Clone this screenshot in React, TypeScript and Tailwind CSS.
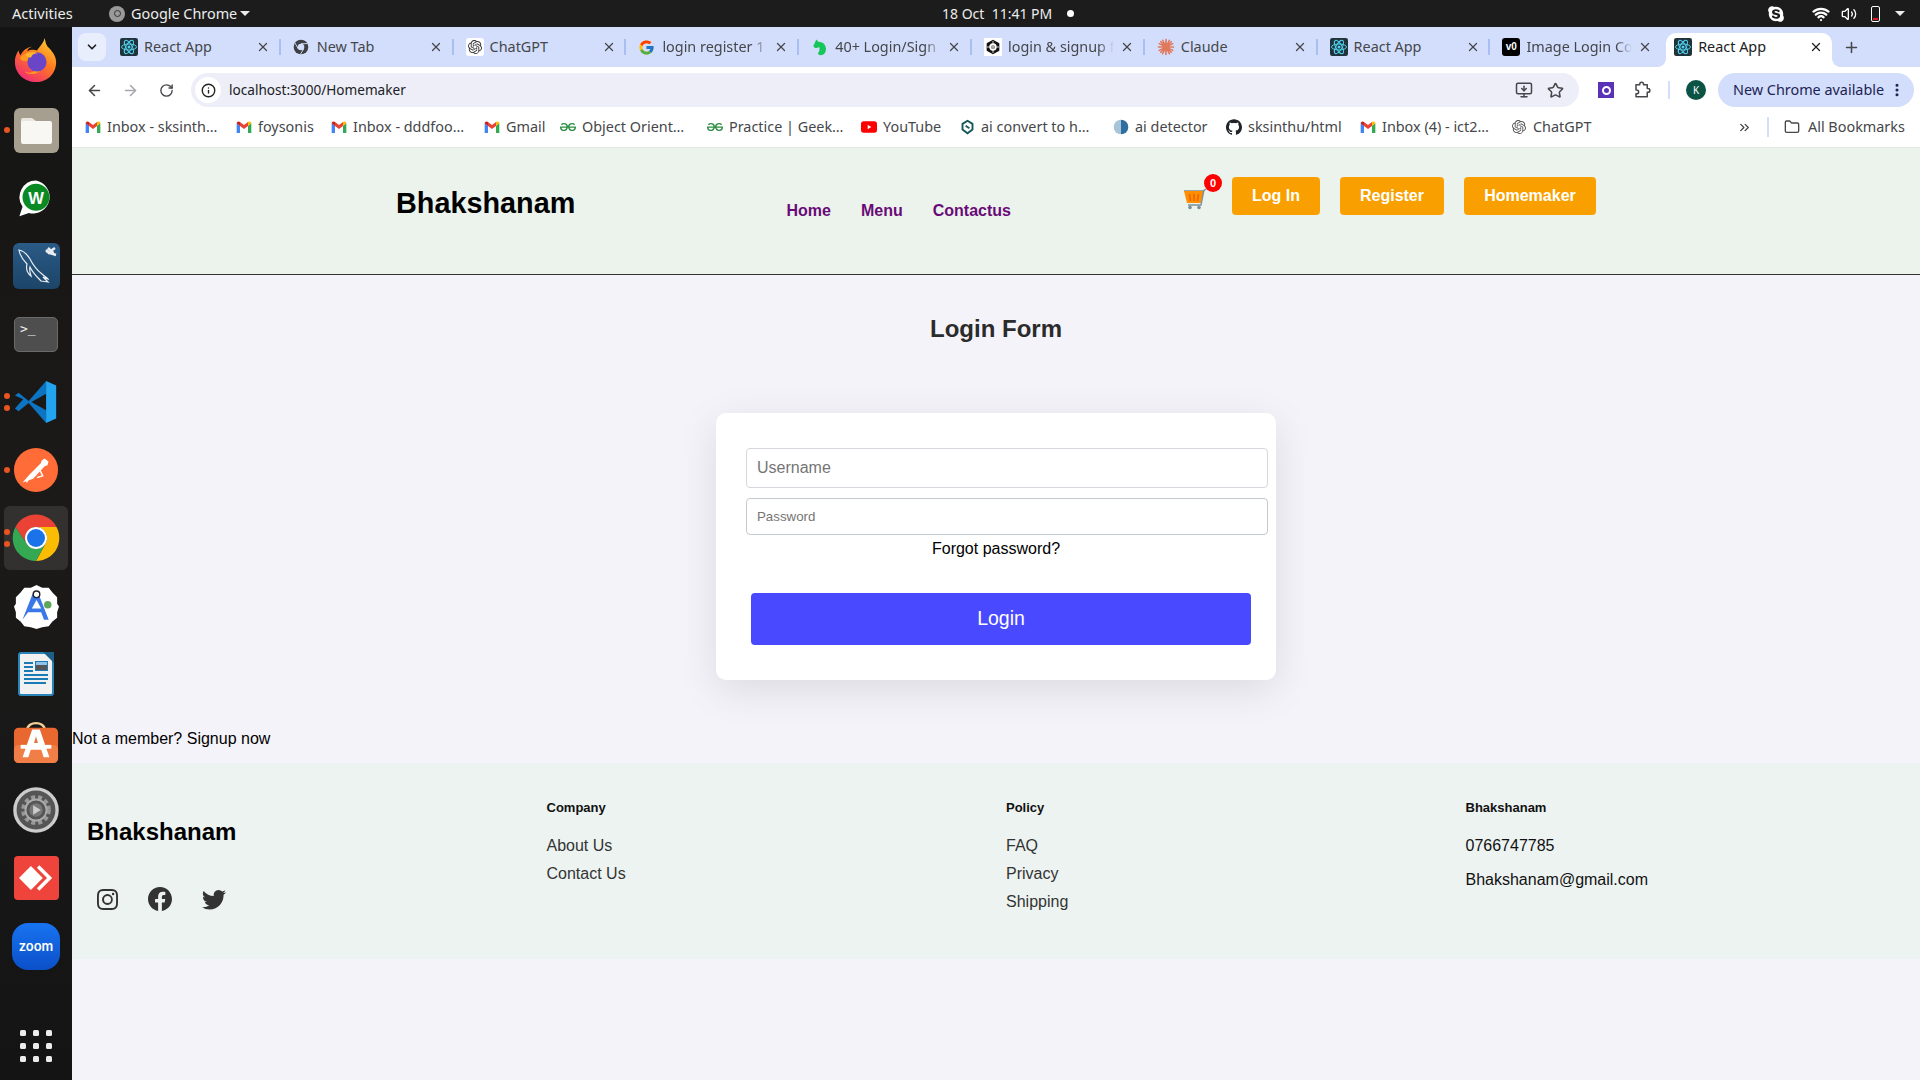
import React from "react";
import { BsInstagram, BsFacebook, BsTwitter } from "react-icons/bs";
import { FaSkype } from "react-icons/fa";
import { SiOpenai, SiGeeksforgeeks, SiGithub } from "react-icons/si";
import { FcGoogle } from "react-icons/fc";
import { ArrowLeft, ArrowRight, RotateCw, Info, Star, MonitorDown, Plus, X, ChevronDown, ChevronsRight, Folder, EllipsisVertical, Volume2, Wifi } from "lucide-react";

const Gmail = () => (
  <svg viewBox="0 0 24 24" className="w-[16px] h-[16px] shrink-0">
    <path fill="#4285F4" d="M1 21h5V10L1 6z" />
    <path fill="#34A853" d="M18 21h5V6l-5 4z" />
    <path fill="#EA4335" d="M6 10.5l6 4.5 6-4.5V4.5L12 9 6 4.5z" />
    <path fill="#C5221F" d="M1 6.5C1 3.8 4 2.6 6 4.5v6L1 6.5z" />
    <path fill="#FBBC04" d="M23 6.5c0-2.7-3-3.9-5-2v6l5-4z" />
  </svg>
);
const ReactFav = () => (
  <svg viewBox="0 0 24 24" className="w-[18px] h-[18px] shrink-0">
    <rect width="24" height="24" rx="3" fill="#20323a" />
    <g fill="none" stroke="#4fd0ee" strokeWidth="1.3">
      <ellipse cx="12" cy="12" rx="10" ry="4" />
      <ellipse cx="12" cy="12" rx="10" ry="4" transform="rotate(60 12 12)" />
      <ellipse cx="12" cy="12" rx="10" ry="4" transform="rotate(120 12 12)" />
    </g>
    <circle cx="12" cy="12" r="2" fill="#4fd0ee" />
  </svg>
);
const ChromeFav = () => (
  <svg viewBox="0 0 24 24" className="w-[16px] h-[16px] shrink-0">
    <circle cx="12" cy="12" r="11" fill="#3c4043" />
    <circle cx="12" cy="12" r="5" fill="#d3defc" />
    <path d="M12 7h10M8 15L3 6M16 15l-5 8" stroke="#d3defc" strokeWidth="1.4" />
  </svg>
);
const GptFav = () => (
  <span className="w-[18px] h-[18px] bg-white rounded-[3px] flex items-center justify-center shrink-0"><SiOpenai size={14} color="#333" /></span>
);
const KnightFav = () => (
  <svg viewBox="0 0 24 24" className="w-[18px] h-[20px] shrink-0">
    <path fill="#16c65a" d="M7 2l3 3c6 0 10 4 10 10 0 4-3 8-7 8-2 0-3-1-4-3 2-1 3-4 2-8-2 1-4 2-6 1L3 11z" />
  </svg>
);
const HexFav = () => (
  <span className="w-[18px] h-[18px] bg-white flex items-center justify-center shrink-0">
    <svg viewBox="0 0 24 24" className="w-[16px] h-[16px]">
      <path d="M12 1l9.5 5.5v11L12 23l-9.5-5.5v-11z" fill="#111" />
      <circle cx="12" cy="12" r="5.5" fill="#fff" />
      <circle cx="12" cy="12" r="2.8" fill="#111" />
      <path d="M12 3v18M3 12h18" stroke="#fff" strokeWidth="1.2" />
    </svg>
  </span>
);
const ClaudeFav = () => (
  <svg viewBox="0 0 24 24" className="w-[18px] h-[18px] shrink-0">
    <g stroke="#e0785a" strokeWidth="2.2" strokeLinecap="round">
      <path d="M12 2v20M2 12h20M5 5l14 14M19 5L5 19M7.5 3l9 18M16.500 3l-9 18M3 7.500l18 9M21 7.500l-18 9" />
    </g>
  </svg>
);
const V0Fav = () => (
  <span className="w-[18px] h-[18px] bg-black rounded-[3px] flex items-center justify-center shrink-0 text-white text-[10px] font-bold leading-none font-['Liberation_Sans',sans-serif]">v0</span>
);

const tabs = [
  { t: "React App", i: <ReactFav /> },
  { t: "New Tab", i: <ChromeFav /> },
  { t: "ChatGPT", i: <GptFav /> },
  { t: "login register 1", i: <FcGoogle size={17} className="shrink-0" /> },
  { t: "40+ Login/Sign", i: <KnightFav /> },
  { t: "login & signup f", i: <HexFav /> },
  { t: "Claude", i: <ClaudeFav /> },
  { t: "React App", i: <ReactFav /> },
  { t: "Image Login Co", i: <V0Fav />, noSep: true },
];

const Gfg = () => <SiGeeksforgeeks size={16} color="#2f8d46" className="shrink-0" />;
const marks = [
  { t: "Inbox - sksinth…", i: <Gmail />, w: "w-[151px]" },
  { t: "foysonis", i: <Gmail />, w: "w-[95px]" },
  { t: "Inbox - dddfoo…", i: <Gmail />, w: "w-[153px]" },
  { t: "Gmail", i: <Gmail />, w: "w-[76px]" },
  { t: "Object Orient…", i: <Gfg />, w: "w-[147px]" },
  { t: "Practice | Geek…", i: <Gfg />, w: "w-[154px]" },
  {
    t: "YouTube",
    i: (
      <svg viewBox="0 0 24 24" className="w-[16px] h-[16px] shrink-0">
        <rect x="0" y="3.500" width="24" height="17" rx="4" fill="#f00" />
        <path d="M10 8.500l5.500 3.500-5.500 3.500z" fill="#fff" />
      </svg>
    ),
    w: "w-[99px]",
  },
  {
    t: "ai convert to  h…",
    i: (
      <svg viewBox="0 0 24 24" className="w-[15px] h-[16px] shrink-0">
        <path d="M12 2l8 5v9l-8 6-8-6V7z" fill="none" stroke="#14585a" strokeWidth="3" />
        <path d="M9 10l6 4" stroke="#14585a" strokeWidth="3" />
      </svg>
    ),
    w: "w-[153px]",
  },
  {
    t: "ai detector",
    i: (
      <svg viewBox="0 0 24 24" className="w-[16px] h-[16px] shrink-0">
        <path d="M12 1a11 11 0 000 22z" fill="#a8c4d8" />
        <path d="M12 1a11 11 0 010 22z" fill="#2f6f9f" />
      </svg>
    ),
    w: "w-[113px]",
  },
  { t: "sksinthu/html", i: <SiGithub size={16} color="#1f2328" className="shrink-0" />, w: "w-[134px]" },
  { t: "Inbox (4) - ict2…", i: <Gmail />, w: "w-[151px]" },
  { t: "ChatGPT", i: <SiOpenai size={14} color="#555" className="shrink-0 mx-[1px]" />, w: "w-[100px]" },
];

const Tile = ({ children, dots = 0, active = false }: { children: React.ReactNode; dots?: number; active?: boolean }) => (
  <div className="relative h-[68px] flex items-center justify-center">
    {active && <div className="absolute left-[4px] right-[4px] top-[2px] bottom-[2px] rounded-[6px] bg-white/10" />}
    {dots > 0 && (
      <div className="absolute left-[4px] top-0 bottom-0 flex flex-col justify-center gap-[6px]">
        {Array.from({ length: dots }).map((_, n) => (
          <span key={n} className="w-[6px] h-[6px] rounded-full bg-[#e95420]" />
        ))}
      </div>
    )}
    <div className="relative flex items-center justify-center">{children}</div>
  </div>
);

const Dock = () => (
  <div className="w-[72px] shrink-0 bg-[linear-gradient(180deg,#141414,#1c1a18_45%,#181818_70%,#141414)] flex flex-col pt-px">
    <Tile>
      <svg viewBox="0 0 48 48" className="w-[46px] h-[46px] mb-[4px]">
        <defs>
          <linearGradient id="ff" x1="0.8" y1="0" x2="0.2" y2="1">
            <stop offset="0" stopColor="#ffcf30" />
            <stop offset="0.45" stopColor="#ff7a1f" />
            <stop offset="1" stopColor="#f0267a" />
          </linearGradient>
        </defs>
        <path fill="url(#ff)" d="M33 1c1 4 1 6 3 9 5 5 9 10 9 16 0 12-9 21-21 21S2 38 2 26c0-5 2-10 4-12 0 2 1 4 2 5 2-5 7-8 12-9-3 1-5 3-5 5 3-2 7-2 10-1 3-4 7-8 8-13z" />
        <path fill="#ff9a1f" d="M7 22c4-5 12-7 17-5 6 2 9 8 7 14-3 8-13 10-19 5 6 3 13 0 13-6 0-3-3-6-8-5-4 0-8 1-10-3z" />
        <circle cx="25" cy="26" r="10" fill="#6a45c8" />
        <path fill="#ffb52e" d="M13 18c4-3 9-3 13-1-3 0-6 1-7 4-2 1-5 0-6-3z" />
      </svg>
    </Tile>
    <Tile dots={1}>
      <div className="w-[45px] h-[45px] rounded-[6px] bg-[#a69e8e] flex items-center justify-center">
        <svg viewBox="0 0 32 32" className="w-[34px] h-[32px]">
          <path fill="#e9e5dc" d="M1 6a2 2 0 012-2h9l4 3v4H1z" />
          <rect x="1" y="7" width="31" height="23" rx="2" fill="#f8f7f4" />
        </svg>
      </div>
    </Tile>
    <Tile>
      <svg viewBox="0 0 48 48" className="w-[38px] h-[38px]">
        <path fill="#fff" d="M24 2a21 21 0 00-17 33L3 47l12-4a21 21 0 109-41z" />
        <circle cx="24" cy="23" r="17" fill="#0a8a22" />
        <text x="24" y="31" textAnchor="middle" fontSize="21" fontWeight="700" fill="#fff" fontFamily="Liberation Sans">W</text>
      </svg>
    </Tile>
    <Tile>
      <div className="w-[47px] h-[46px] rounded-[6px] bg-[linear-gradient(180deg,#2a5a86,#1c4568)]">
        <svg viewBox="0 0 47 46" className="w-full h-full" fill="none" stroke="#e8eef3" strokeWidth="1.2">
          <path d="M6 7c5 1 8 4 11 9 3 6 8 12 12 15 2 2 5 3 6 5l-5-2 5 5-7-1c-5-5-9-9-11-14-1 3 0 6 1 9-4-3-5-8-4-12-3-3-7-8-8-14z" />
          <path d="M33 8l6 3m3-6l-3 2 1 4 3 1m-8-7l3 3-2 2-3-3" strokeWidth="2.500" />
        </svg>
      </div>
    </Tile>
    <Tile>
      <div className="w-[44px] h-[35px] rounded-[5px] bg-[#4e4e4e] border border-[#6a6a6a] text-[#f0f0f0] text-[13px] leading-none pl-[5px] pt-[4px] font-['DejaVu_Sans_Mono',monospace] overflow-hidden">
        &gt;_
      </div>
    </Tile>
    <Tile dots={2}>
      <svg viewBox="0 0 48 48" className="w-[44px] h-[44px]">
        <path fill="#0c74c0" d="M1 17l4-3 11 9 19-22v14L19 24l16 9 0 14-19-22-11 9-4-3 9-10z" />
        <path fill="#22a4ee" d="M35 1l11 5v36l-11 5z" />
      </svg>
    </Tile>
    <Tile dots={1}>
      <svg viewBox="0 0 48 48" className="w-[46px] h-[46px]">
        <circle cx="24" cy="24" r="23" fill="#ff6c37" />
        <path fill="#fff" d="M10 37l11-4 12-13 3-1 1-4-4-3-3 2-1 3-12 12z" />
        <path stroke="#fff" strokeWidth="1.500" d="M18 30l-4 7M27 22l4 8-6 2" fill="none" />
      </svg>
    </Tile>
    <Tile dots={2} active>
      <svg viewBox="0 0 48 48" className="w-[48px] h-[48px]">
        <path fill="#ea4335" d="M24 13H44.500A23 23 0 003.500 13L14.500 29.500A11 11 0 0124 13z" />
        <path fill="#fbbc04" d="M44.500 13A23 23 0 0124 47L33.500 29.500A11 11 0 0024 13z" />
        <path fill="#34a853" d="M24 47A23 23 0 013.500 13L14.500 29.500A11 11 0 0033.500 29.500z" />
        <circle cx="24" cy="24" r="11" fill="#fff" />
        <circle cx="24" cy="24" r="9" fill="#1a73e8" />
      </svg>
    </Tile>
    <Tile>
      <svg viewBox="0 0 48 48" className="w-[45px] h-[45px]">
        <path fill="#fff" d="M24 1l6 3 7 0 4 5 5 5 0 7 2 3-2 6 0 6-5 4-4 5-7 1-6 2-6-2-7-1-4-5-5-4 0-6-2-6 2-3 0-7 5-5 4-5 7 0z" />
        <path fill="#3b78e7" d="M22 10h4l11 28h-5l-3-8H15l-6 8 11-28zm2 7l-5 9h10z" />
        <circle cx="24" cy="11" r="3.500" fill="#fff" stroke="#222" strokeWidth="1.500" />
        <circle cx="36" cy="22" r="4" fill="#5fa55a" />
      </svg>
    </Tile>
    <Tile>
      <div className="relative w-[36px] h-[44px] rounded-[3px] bg-[#f1f1f1] border-[2px] border-[#2a84b8] flex flex-col p-[4px] gap-[2px]">
        <span className="absolute -top-[2px] -right-[2px] w-0 h-0 border-l-[11px] border-l-transparent border-t-[11px] border-t-[#1c5f8a]" />
        <div className="flex gap-[2px] mt-[3px]">
          <div className="flex flex-col gap-[2px] w-[10px] pt-[1px]">
            <span className="h-[2px] bg-[#1b7bb5]" /><span className="h-[2px] bg-[#1b7bb5]" /><span className="h-[2px] bg-[#1b7bb5]" />
          </div>
          <div className="w-[14px] h-[10px] bg-[linear-gradient(180deg,#8fc3e8_40%,#555_40%)] border border-[#1b7bb5]" />
        </div>
        <span className="h-[2px] bg-[#1b7bb5]" /><span className="h-[2px] bg-[#1b7bb5]" /><span className="h-[2px] w-[22px] bg-[#1b7bb5]" />
      </div>
    </Tile>
    <Tile>
      <svg viewBox="0 0 48 48" className="w-[46px] h-[46px]">
        <path d="M15 11c0-9 18-9 18 0" fill="none" stroke="#f4d29a" strokeWidth="2.500" />
        <rect x="1" y="9" width="46" height="37" rx="5" fill="#e8682f" />
        <rect x="1" y="27" width="46" height="19" rx="5" fill="#f07e46" />
        <path d="M20 11h8l10 29h-6l-2.500-8h-11L16 40h-6z" fill="#fff" />
        <rect x="8" y="27" width="32" height="4" fill="#fff" />
        <path d="M22 25h4l-2-7z" fill="#ec7038" />
      </svg>
    </Tile>
    <Tile>
      <svg viewBox="0 0 48 48" className="w-[46px] h-[46px]">
        <circle cx="24" cy="24" r="22" fill="#555" stroke="#ccc" strokeWidth="3.500" />
        <circle cx="24" cy="24" r="13" fill="none" stroke="#999" strokeWidth="5" strokeDasharray="4 3" />
        <circle cx="24" cy="24" r="11" fill="none" stroke="#aaa" strokeWidth="2" />
        <circle cx="24" cy="24" r="7" fill="#777" />
        <path d="M21 19l8 5-8 5z" fill="#ccc" />
      </svg>
    </Tile>
    <Tile>
      <div className="w-[45px] h-[44px] rounded-[4px] bg-[#ef443b] flex items-center justify-center">
        <svg viewBox="0 0 40 40" className="w-[34px] h-[34px]">
          <path d="M14 6l14 14-14 14L0 20z" fill="#fff" />
          <path d="M24 5l15 15-15 15-3-3 12-12L21 8z" fill="#fff" />
        </svg>
      </div>
    </Tile>
    <Tile>
      <div className="w-[48px] h-[47px] rounded-[16px] bg-[linear-gradient(180deg,#1873f0,#0b50c8)] flex items-center justify-center text-white text-[13px] font-semibold leading-none font-['Inter',sans-serif]">
        zoom
      </div>
    </Tile>
    <div className="mt-[50px] mx-auto grid grid-cols-3 gap-[7px] w-[32px]">
      {Array.from({ length: 9 }).map((_, n) => (
        <span key={n} className="w-[6px] h-[6px] rounded-[1.500px] bg-[#ececec]" />
      ))}
    </div>
  </div>
);

const Cart = () => (
  <svg viewBox="0 0 24 22" className="w-[24px] h-[22px]">
    <path d="M1 3h19l3-2" fill="none" stroke="#78909c" strokeWidth="1.300" />
    <path d="M1 3h20l-3 12H4z" fill="#ff8f00" />
    <path d="M6.500 6l1 7M11 6v7M15.500 6l-1 7" stroke="#ef6c00" strokeWidth="2" />
    <path d="M21 2l-3 15H5" fill="none" stroke="#78909c" strokeWidth="1.300" />
    <circle cx="7" cy="19.500" r="1.800" fill="#78909c" />
    <circle cx="16" cy="19.500" r="1.800" fill="#78909c" />
  </svg>
);

const OrangeBtn = ({ w, children, cls }: { w: string; children: React.ReactNode; cls: string }) => (
  <button className={`${w} ${cls} h-[38px] rounded-[4px] bg-[#f9a000] text-white text-[16px] font-bold`}>{children}</button>
);

export default function App() {
  return (
    <div className="w-[1920px] h-[1080px] overflow-hidden flex flex-col font-['Liberation_Sans',sans-serif] bg-[#f5f3fa]">
      {/* system bar */}
      <div className="h-[27px] bg-[#1c1c1c] text-[#ececec] text-[14.400px] flex items-center shrink-0 font-['Noto_Sans',sans-serif]">
        <span className="ml-[12px] w-[97px] text-[14.600px]">Activities</span>
        <span className="w-[16px] h-[16px] rounded-full bg-[#9a9a9a] flex items-center justify-center">
          <span className="w-[7px] h-[7px] rounded-full border border-[#333]" />
        </span>
        <span className="ml-[6px] w-[109px]">Google Chrome</span>
        <span className="w-0 h-0 border-l-[5px] border-r-[5px] border-t-[5px] border-l-transparent border-r-transparent border-t-[#ececec]" />
        <span className="ml-[692px] w-[125px] whitespace-pre text-[14px]">18 Oct  11:41 PM</span>
        <span className="w-[7px] h-[7px] rounded-full bg-white" />
        <span className="ml-[693px] w-[18px] flex"><FaSkype size={18} color="#fff" /></span>
        <span className="ml-[27px] flex"><Wifi size={18} color="#fff" strokeWidth={3} /></span>
        <span className="ml-[11px] flex"><Volume2 size={16} color="#fff" /></span>
        <span className="ml-[14px] w-[9px] h-[16px] border border-white rounded-[2px] flex items-end p-[1px]"><span className="w-full h-[2px] bg-[#e01b24]" /></span>
        <span className="ml-[15px] w-0 h-0 border-l-[5px] border-r-[5px] border-t-[5px] border-l-transparent border-r-transparent border-t-[#ececec]" />
      </div>
      <div className="flex flex-1 min-h-0">
        <Dock />
        <div className="flex-1 min-w-0 flex flex-col">
          {/* Tab strip */}
          <div className="h-[40px] bg-[#d3defc] flex items-end shrink-0 font-['Noto_Sans',sans-serif] text-[14.400px]">
            <div className="ml-[6px] mb-[6px] w-[28px] h-[28px] rounded-[8px] bg-[#e9eefd] flex items-center justify-center">
              <ChevronDown size={14} color="#222" strokeWidth={3} />
            </div>
            <div className="w-[2px]" />
            {tabs.map((t, n) => (
              <div key={n} className="w-[172.800px] h-[34px] flex items-center relative pl-[12px] pb-[6px] text-[#45474a]">
                {t.i}
                <span className={`absolute left-[36px] w-[106px] overflow-hidden whitespace-nowrap ${t.t.length > 12 ? "[mask-image:linear-gradient(to_right,black_85%,transparent)]" : ""}`}>{t.t}</span>
                <X size={14} color="#45474a" strokeWidth={2.2} className="absolute left-[148px]" />
                {!t.noSep && <span className="absolute right-0 top-[6px] h-[16px] w-[2px] bg-[#a9bff2]" />}
              </div>
            ))}
            <div className="ml-[3px] w-[166px] h-[34px] bg-white rounded-t-[10px] flex items-center relative pl-[8px] pb-[6px] text-[#202124]">
              <span className="absolute -left-[8px] bottom-0 w-[8px] h-[8px] bg-[radial-gradient(circle_at_0_0,transparent_7.500px,white_8px)]" />
              <span className="absolute -right-[8px] bottom-0 w-[8px] h-[8px] bg-[radial-gradient(circle_at_100%_0,transparent_7.500px,white_8px)]" />
              <ReactFav />
              <span className="ml-[6px]">React App</span>
              <X size={14} color="#202124" strokeWidth={2.2} className="absolute left-[143px]" />
            </div>
            <Plus size={17} color="#45474a" strokeWidth={2.2} className="ml-[11px] mb-[11px]" />
          </div>
          {/* Toolbar */}
          <div className="h-[46px] bg-white flex items-center shrink-0 font-['Noto_Sans',sans-serif]">
            <ArrowLeft size={17} color="#45474a" strokeWidth={2.2} className="ml-[14px]" />
            <ArrowRight size={17} color="#a5a7aa" strokeWidth={2.2} className="ml-[19px]" />
            <RotateCw size={15} color="#45474a" strokeWidth={2.2} className="ml-[20px]" />
            <div className="ml-[17px] w-[1388px] h-[34px] rounded-full bg-[#edeef8] flex items-center">
              <span className="ml-[4px] w-[26px] h-[26px] rounded-full bg-white flex items-center justify-center"><Info size={15} color="#222" strokeWidth={2.2} /></span>
              <span className="ml-[8px] text-[13.600px] text-[#202124]">localhost:3000/Homemaker</span>
              <MonitorDown size={18} color="#45474a" strokeWidth={2} className="ml-auto mr-[14px]" />
              <Star size={17} color="#45474a" strokeWidth={2.2} className="mr-[15px]" />
            </div>
            <span className="ml-[19px] w-[16px] h-[16px] bg-[#5a32b8] flex items-center justify-center">
              <span className="w-[9px] h-[9px] rounded-full border-[2px] border-white" />
            </span>
            <svg viewBox="0 0 24 24" className="ml-[19px] w-[18px] h-[18px]" fill="none" stroke="#45474a" strokeWidth="2" strokeLinejoin="round">
              <path d="M4 5h5V4a2.500 2.500 0 015 0v1h5v5h1a2.500 2.500 0 010 5h-1v6H4v-4h1a2.500 2.500 0 000-5H4z" />
            </svg>
            <span className="ml-[17px] w-[2px] h-[18px] bg-[#d3defc]" />
            <span className="ml-[16px] w-[20px] h-[20px] rounded-full bg-[#0b5345] text-white text-[10px] flex items-center justify-center">K</span>
            <div className="relative ml-[12px] w-[196px] h-[34px] rounded-full bg-[#d3defc] flex items-center pl-[15px] text-[14.400px] text-[#1d2353] whitespace-nowrap">
              New Chrome available
              <EllipsisVertical size={16} color="#1d2353" strokeWidth={2.6} className="absolute right-[9px]" />
            </div>
          </div>
          {/* Bookmarks */}
          <div className="h-[35px] bg-white border-b border-[#e2e8e2] flex items-center shrink-0 pl-[13px] pb-[6px] text-[14.400px] text-[#45474a] font-['Noto_Sans',sans-serif] whitespace-nowrap">
            {marks.map((m, n) => (
              <div key={n} className={`${m.w} shrink-0 flex items-center gap-[6px]`}>
                {m.i}
                <span className="leading-none">{m.t}</span>
              </div>
            ))}
            <ChevronsRight size={15} color="#45474a" strokeWidth={2.2} className="ml-[126px]" />
            <span className="ml-[15px] w-[2px] h-[20px] bg-[#d3defc]" />
            <Folder size={16} color="#45474a" strokeWidth={2} className="ml-[15px]" />
            <span className="ml-[8px]">All Bookmarks</span>
          </div>

          {/* Page */}
          <div className="flex-1 min-h-0 bg-[#f5f3fa] text-black">
            <header className="h-[127px] bg-[#ebf3ec] border-b-[1.500px] border-[#333] flex items-start">
              <div className="ml-[324px] mt-[38px] w-[390.500px] text-[28.800px] font-bold leading-[34px] text-black">Bhakshanam</div>
              <nav className="mt-[54px] flex gap-[30px] text-[16px] font-bold leading-[18px] text-[#6a0a78]">
                <a>Home</a>
                <a>Menu</a>
                <a>Contactus</a>
              </nav>
              <div className="relative ml-[172px] mt-[40px]">
                <Cart />
                <span className="absolute -right-[15px] -top-[14px] w-[18px] h-[18px] rounded-full bg-[#f00] text-white text-[11px] font-bold flex items-center justify-center">0</span>
              </div>
              <OrangeBtn w="w-[88px]" cls="ml-[25px] mt-[29px]">Log In</OrangeBtn>
              <OrangeBtn w="w-[104px]" cls="ml-[20px] mt-[29px]">Register</OrangeBtn>
              <OrangeBtn w="w-[132px]" cls="ml-[20px] mt-[29px]">Homemaker</OrangeBtn>
            </header>
            <h1 className="mt-[40px] text-center text-[24px] font-bold leading-[28px] text-[#2b2b2b]">Login Form</h1>
            <div className="mt-[70px] mx-auto w-[560px] h-[267px] bg-white rounded-[10px] shadow-[0_10px_40px_rgba(0,0,0,0.1)] pt-[35px] pl-[30px] flex flex-col">
              <div className="w-[521.500px] h-[40px] rounded-[4px] border border-[#d4d7dc] pl-[10px] flex items-center text-[16px] text-[#757575]">Username</div>
              <div className="mt-[10px] w-[521.500px] h-[37px] rounded-[4px] border border-[#c4c9d0] pl-[10px] flex items-center text-[13.300px] text-[#757575]">Password</div>
              <div className="mt-[5px] w-[500px] text-center text-[16px] leading-[18px]">Forgot password?</div>
              <button className="mt-[35px] ml-[5px] w-[500px] h-[52px] rounded-[4px] bg-[#4949ff] text-white text-[19.500px]">Login</button>
            </div>
            <p className="mt-[50px] text-[16px] leading-[18px]">Not a member? Signup now</p>
            <footer className="mt-[15px] h-[196px] bg-[#edf3f1] pl-[15px] grid grid-cols-[459.500px_459.500px_459.500px_1fr]">
              <div>
                <div className="mt-[54px] text-[24px] font-bold leading-[30px] text-black">Bhakshanam</div>
                <div className="mt-[40px] ml-[10px] flex items-center text-[#333]">
                  <BsInstagram size={21} />
                  <BsFacebook size={24} className="ml-[30px]" />
                  <BsTwitter size={24} className="ml-[30px]" />
                </div>
              </div>
              <div className="pt-[37px]">
                <div className="text-[13px] font-bold leading-[15px] mb-[22px] text-[#111]">Company</div>
                <div className="flex flex-col gap-[10px] text-[16px] leading-[18px] text-[#333]">
                  <span>About Us</span>
                  <span>Contact Us</span>
                </div>
              </div>
              <div className="pt-[37px]">
                <div className="text-[13px] font-bold leading-[15px] mb-[22px] text-[#111]">Policy</div>
                <div className="flex flex-col gap-[10px] text-[16px] leading-[18px] text-[#333]">
                  <span>FAQ</span>
                  <span>Privacy</span>
                  <span>Shipping</span>
                </div>
              </div>
              <div className="pt-[37px]">
                <div className="text-[13px] font-bold leading-[15px] mb-[22px] text-[#111]">Bhakshanam</div>
                <div className="flex flex-col gap-[16px] text-[16px] leading-[18px] text-[#111]">
                  <span>0766747785</span>
                  <span>Bhakshanam@gmail.com</span>
                </div>
              </div>
            </footer>
          </div>
        </div>
      </div>
    </div>
  );
}
